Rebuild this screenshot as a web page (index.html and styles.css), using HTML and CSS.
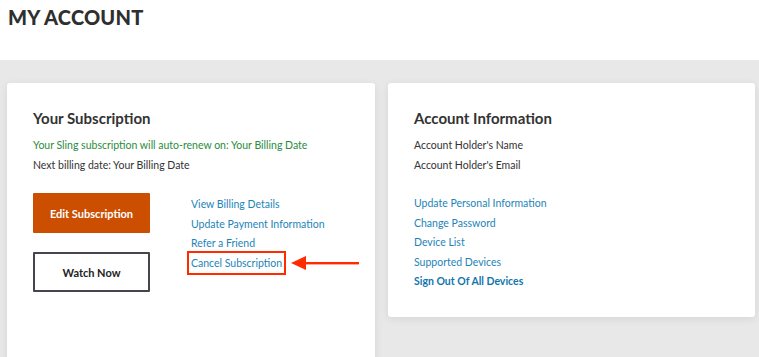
FILE: index.html
```html
<!DOCTYPE html>
<html lang="en">
<head>
  <meta charset="UTF-8" />
  <meta name="viewport" content="width=device-width, initial-scale=1" />
  <title>My Account</title>
  <link rel="stylesheet" href="styles.css">
</head>
<body>

<header class="page-head">
  <h1>MY ACCOUNT</h1>
</header>

<main class="account">
  <section class="card card-sub">
    <h2>Your Subscription</h2>
    <p class="renew">Your Sling subscription will auto-renew on: Your Billing Date</p>
    <p class="info">Next billing date: Your Billing Date</p>

    <div class="sub-actions">
      <div class="buttons">
        <a href="#" class="btn btn-orange">Edit Subscription</a>
        <a href="#" class="btn btn-outline">Watch Now</a>
      </div>
      <div class="links">
        <a href="#">View Billing Details</a>
        <a href="#">Update Payment Information</a>
        <a href="#">Refer a Friend</a>
        <div class="cancel-wrap">
          <a href="#" class="cancel">Cancel Subscription</a>
          <svg class="arrow" width="70" height="16" viewBox="0 0 70 16">
            <polygon points="0,8 15,1 15,15" fill="#ff2a00" />
            <rect x="14" y="7" width="54" height="2.4" fill="#ff2a00" />
          </svg>
        </div>
      </div>
    </div>
  </section>

  <section class="card card-info">
    <h2>Account Information</h2>
    <p class="info">Account Holder's Name</p>
    <p class="info">Account Holder's Email</p>

    <div class="links info-links">
      <a href="#">Update Personal Information</a>
      <a href="#">Change Password</a>
      <a href="#">Device List</a>
      <a href="#">Supported Devices</a>
      <a href="#" class="strong">Sign Out Of All Devices</a>
    </div>
  </section>
</main>

</body>
</html>
```

FILE: styles.css
```css
* {
  margin: 0;
  padding: 0;
  box-sizing: border-box;
}

body {
  font-family: 'Lato', 'Open Sans', sans-serif;
  background-color: #ffffff;
  color: #333333;
  width: 759px;
  height: 357px;
  overflow: hidden;
}

.page-head {
  height: 60px;
  padding: 5px 8px 0;
}

.page-head h1 {
  font-size: 20px;
  font-weight: 900;
  color: #2f2f2f;
  letter-spacing: 0.2px;
}

.account {
  background-color: #e8e8e8;
  height: 297px;
  padding: 23px 4px 0 7px;
  display: grid;
  grid-template-columns: 368px 367px;
  column-gap: 13px;
  align-items: start;
}

.card {
  background-color: #ffffff;
  border-radius: 3px;
  padding: 26px 26px 0;
  box-shadow: 0 2px 8px rgba(0, 0, 0, 0.08);
}

.card-sub {
  height: 290px;
}

.card-info {
  height: 234px;
}

.card h2 {
  font-size: 15px;
  font-weight: 700;
  color: #333333;
  margin-bottom: 9px;
}

.card p {
  font-size: 10.5px;
  line-height: 19.5px;
}

.renew {
  color: #2a8c3c;
}

.info {
  color: #333333;
}

.sub-actions {
  display: flex;
  margin-top: 18px;
}

.buttons {
  display: flex;
  flex-direction: column;
  gap: 19px;
  width: 117px;
  margin-right: 41px;
}

.btn {
  display: flex;
  align-items: center;
  justify-content: center;
  height: 40px;
  font-size: 11px;
  font-weight: 700;
  text-decoration: none;
  border-radius: 1px;
}

.btn-orange {
  background-color: #cc4e00;
  color: #ffffff;
}

.btn-outline {
  border: 2px solid #45454d;
  color: #222222;
}

.links {
  display: flex;
  flex-direction: column;
  padding-top: 2px;
}

.links a {
  font-size: 10.5px;
  line-height: 19.6px;
  color: #1d84b8;
  text-decoration: none;
}

.cancel-wrap {
  position: relative;
  display: flex;
  margin-top: -1px;
}

.links a.cancel {
  outline: 2px solid #ff2a00;
  outline-offset: 0;
  padding: 0 2px;
  margin-left: -2px;
  line-height: 20px;
}

.arrow {
  position: absolute;
  left: 100px;
  top: 2px;
}

.info-links {
  margin-top: 17px;
}

.links a.strong {
  font-weight: 700;
  color: #0f76ad;
}
```
